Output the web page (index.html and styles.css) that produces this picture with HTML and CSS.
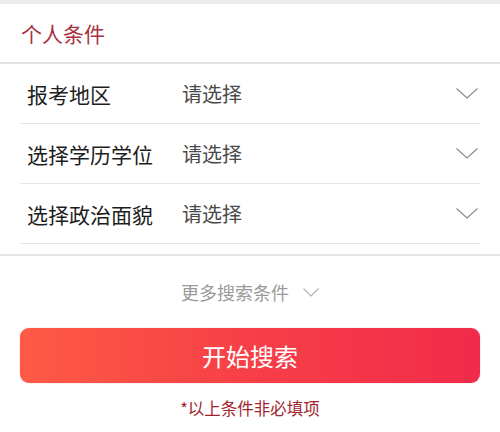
FILE: index.html
```html
<!DOCTYPE html>
<html lang="zh">
<head>
<meta charset="utf-8">
<link rel="stylesheet" href="styles.css">
</head>
<body>
<div class="topbar"></div>
<div class="title">个人条件</div>
<div class="list">
  <div class="row">
    <span class="label">报考地区</span>
    <span class="value">请选择</span>
    <svg class="chev" viewBox="0 0 22 11"><path d="M0.5 0.5 L11 10 L21.5 0.5" fill="none" stroke="#8a8a8a" stroke-width="1.1"/></svg>
  </div>
  <div class="row">
    <span class="label">选择学历学位</span>
    <span class="value">请选择</span>
    <svg class="chev" viewBox="0 0 22 11"><path d="M0.5 0.5 L11 10 L21.5 0.5" fill="none" stroke="#8a8a8a" stroke-width="1.1"/></svg>
  </div>
  <div class="row">
    <span class="label">选择政治面貌</span>
    <span class="value">请选择</span>
    <svg class="chev" viewBox="0 0 22 11"><path d="M0.5 0.5 L11 10 L21.5 0.5" fill="none" stroke="#8a8a8a" stroke-width="1.1"/></svg>
  </div>
</div>
<div class="divider"></div>
<div class="more">
  <span>更多搜索条件</span>
  <svg class="chev-small" viewBox="0 0 16 9"><path d="M0.5 0.5 L8 8 L15.5 0.5" fill="none" stroke="#b0b0b0" stroke-width="1.1"/></svg>
</div>
<div class="btn-wrap">
  <div class="btn">开始搜索</div>
</div>
<div class="note">*以上条件非必填项</div>
</body>
</html>
```

FILE: styles.css
```css
html, body {
  margin: 0;
  padding: 0;
  background: #fff;
  font-family: "Noto Sans CJK SC", "Noto Sans", sans-serif;
}
.topbar {
  height: 4px;
  background: #ececec;
}
.title {
  height: 58px;
  line-height: 58px;
  padding-left: 21px;
  font-size: 21px;
  color: #a6323f;
  border-bottom: 2px solid #e2e2e2;
}
.list {
  padding: 0 20px;
}
.row {
  display: flex;
  align-items: center;
  height: 59px;
  border-bottom: 1px solid #e6e6e6;
  padding-left: 7px;
}
.label {
  width: 155px;
  font-size: 21px;
  color: #1e1e1e;
}
.value {
  flex: 1;
  font-size: 20px;
  color: #4a4a4a;
}
.chev {
  width: 22px;
  height: 11px;
  margin-right: 2px;
}
.divider {
  margin-top: 10px;
  height: 2px;
  background: #e6e6e6;
}
.more {
  display: flex;
  align-items: center;
  justify-content: center;
  gap: 14px;
  height: 72px;
  font-size: 18px;
  color: #9a9a9a;
}
.chev-small {
  width: 16px;
  height: 9px;
}
.btn-wrap {
  padding: 0 20px;
}
.btn {
  height: 55px;
  border-radius: 9px;
  background: linear-gradient(90deg, #fe5a45 0%, #f73f47 50%, #f02b4b 100%);
  color: #fff;
  font-size: 24px;
  display: flex;
  align-items: center;
  justify-content: center;
  box-shadow: 0 0 1px rgba(160, 40, 40, 0.6);
}
.note {
  text-align: center;
  margin-top: 13px;
  font-size: 16.5px;
  color: #a2252e;
}
```
